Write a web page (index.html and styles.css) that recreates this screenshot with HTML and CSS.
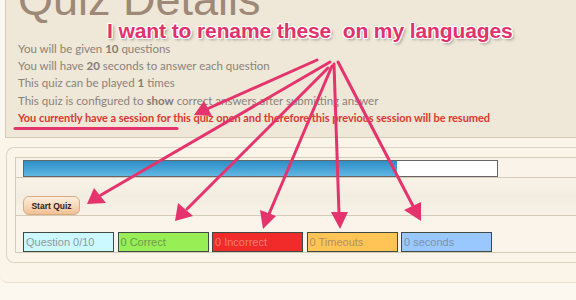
FILE: index.html
```html
<!DOCTYPE html>
<html>
<head>
<meta charset="utf-8">
<link rel="stylesheet" href="styles.css">
</head>
<body>
<div class="page">
  <section class="details">
    <h1 class="title">Quiz Details</h1>
    <ul class="info">
      <li>You will be given <b>10</b> questions</li>
      <li>You will have <b>20</b> seconds to answer each question</li>
      <li>This quiz can be played <b>1</b> times</li>
      <li>This quiz is configured to <b>show</b> correct answers after submitting answer</li>
      <li class="warn">You currently have a session for this quiz open and therefore this previous session will be resumed</li>
    </ul>
  </section>
  <section class="quiz">
    <div class="box">
      <div class="rows">
        <div class="row row-progress">
          <div class="progress"><div class="fill" style="width:78.9%"></div></div>
        </div>
        <div class="row row-button">
          <button class="start">Start Quiz</button>
        </div>
        <div class="row row-stats">
          <div class="stat s-question">Question 0/10</div>
          <div class="stat s-correct">0 Correct</div>
          <div class="stat s-incorrect">0 Incorrect</div>
          <div class="stat s-timeouts">0 Timeouts</div>
          <div class="stat s-seconds">0 seconds</div>
        </div>
      </div>
    </div>
  </section>
  <div class="annotation">I want to rename these&nbsp; on my languages</div>
  <svg class="arrows" width="576" height="300" viewBox="0 0 576 300">
    <g stroke="#e5336d" stroke-width="3" stroke-linecap="round" fill="none">
      <line x1="15" y1="128.5" x2="177" y2="128.5"/>
      <line x1="317" y1="60" x2="207" y2="109"/>
      <line x1="330" y1="62" x2="101" y2="195"/>
      <line x1="328" y1="68" x2="187" y2="209"/>
      <line x1="332" y1="66" x2="269" y2="214"/>
      <line x1="334" y1="64" x2="339" y2="214"/>
      <line x1="338" y1="62" x2="413" y2="206"/>
    </g>
    <g fill="#e5336d">
      <polygon points="194,115 204,101 212,116"/>
      <polygon points="87,204 94,188 106,203"/>
      <polygon points="175,221 178,203 193,216"/>
      <polygon points="263,229 260,210 276,216"/>
      <polygon points="340,229 331,212 348,212"/>
      <polygon points="421,221 404,210 421,202"/>
    </g>
  </svg>
</div>
</body>
</html>
```

FILE: styles.css
```css
* { box-sizing: border-box; }
html, body { margin: 0; padding: 0; }
body {
  background: #fdf8ef;
  width: 576px;
  height: 300px;
  overflow: hidden;
  font-family: "Lato", "Liberation Sans", sans-serif;
}
.page { position: relative; width: 576px; height: 300px; }

.details {
  display: flow-root;
  margin-left: 5px;
  background: #efe7d7;
  border-left: 1px solid #d6cab6;
  border-bottom: 1px solid #d6cab6;
  padding: 0 0 11px 12px;
}
.title {
  margin: -23px 0 0;
  font-family: "Liberation Sans", sans-serif;
  font-weight: normal;
  font-size: 45px;
  line-height: 45px;
  color: #9e8877;
}
.info {
  list-style: none;
  margin: 18px 0 0;
  padding: 0;
  font-size: 11.5px;
  line-height: 17.2px;
  color: #8c827a;
}
.info b { font-weight: bold; color: #857b72; }
.info .warn { color: #d93a2c; font-weight: bold; font-size: 11px; letter-spacing: -0.05px; }

.quiz {
  background: #fbf4e8;
  padding: 9px 0 19px 6px;
  border-bottom: 1px solid #e9e0d0;
  border-bottom-left-radius: 8px;
}
.box {
  border: 1px solid #ddd3c2;
  border-right: none;
  border-radius: 8px 0 0 8px;
  padding: 9px 0 9px 8px;
}
.rows {
  border-left: 1px solid #d5cab8;
  border-top: 1px solid #d5cab8;
}
.row {
  border-bottom: 1px solid #d5cab8;
  padding-left: 7px;
  background: linear-gradient(#f8f2e8, #f3ece0 50%, #f8f2e8);
}
.row-progress { padding-top: 2px; background: #f9f3e9; }
.row-button { padding-top: 18px; }
.row-stats { padding-top: 16px; display: flex; gap: 3.5px; background: #faf4ea; }

.progress {
  width: 475px;
  height: 17px;
  border: 1px solid #666;
  background: #fff;
}
.fill {
  height: 100%;
  background: linear-gradient(#2f8ec6, #4aa6d8 60%, #62b6e2);
}

.start {
  display: block;
  width: 57px;
  height: 19px;
  padding: 0;
  margin: 0;
  border: 1px solid #d9ab85;
  border-radius: 6px;
  background: linear-gradient(#fdeedd, #f8d6b6 55%, #f0c096);
  font-family: "Liberation Sans", sans-serif;
  font-weight: bold;
  font-size: 8.5px;
  color: #2a2320;
}

.stat {
  width: 91px;
  height: 20px;
  border: 1px solid #3f4a44;
  font-family: "Liberation Sans", sans-serif;
  font-size: 11px;
  line-height: 18px;
  padding-left: 2px;
  white-space: nowrap;
}
.s-question { background: #ccf8ff; color: #8c9a9c; }
.s-correct { background: #97ee55; color: #6f9a4e; }
.s-incorrect { background: #f12a2a; color: #f08070; }
.s-timeouts { background: #ffc456; color: #b49262; }
.s-seconds { background: #99c8fe; color: #7f93a8; }

.annotation {
  position: absolute;
  left: 107px;
  top: 19px;
  font-family: "Liberation Sans", sans-serif;
  font-weight: bold;
  font-size: 21px;
  line-height: 24px;
  letter-spacing: -0.1px;
  color: #e2326c;
  white-space: nowrap;
  text-shadow: 1px 1px 0 #fff, -1px -1px 0 #fff, 1px -1px 0 #fff, -1px 1px 0 #fff,
    0 1px 0 #fff, 1px 0 0 #fff, 0 -1px 0 #fff, -1px 0 0 #fff,
    2px 2px 3px rgba(0,0,0,0.35);
}
.arrows {
  position: absolute;
  left: 0;
  top: 0;
  pointer-events: none;
}
```
